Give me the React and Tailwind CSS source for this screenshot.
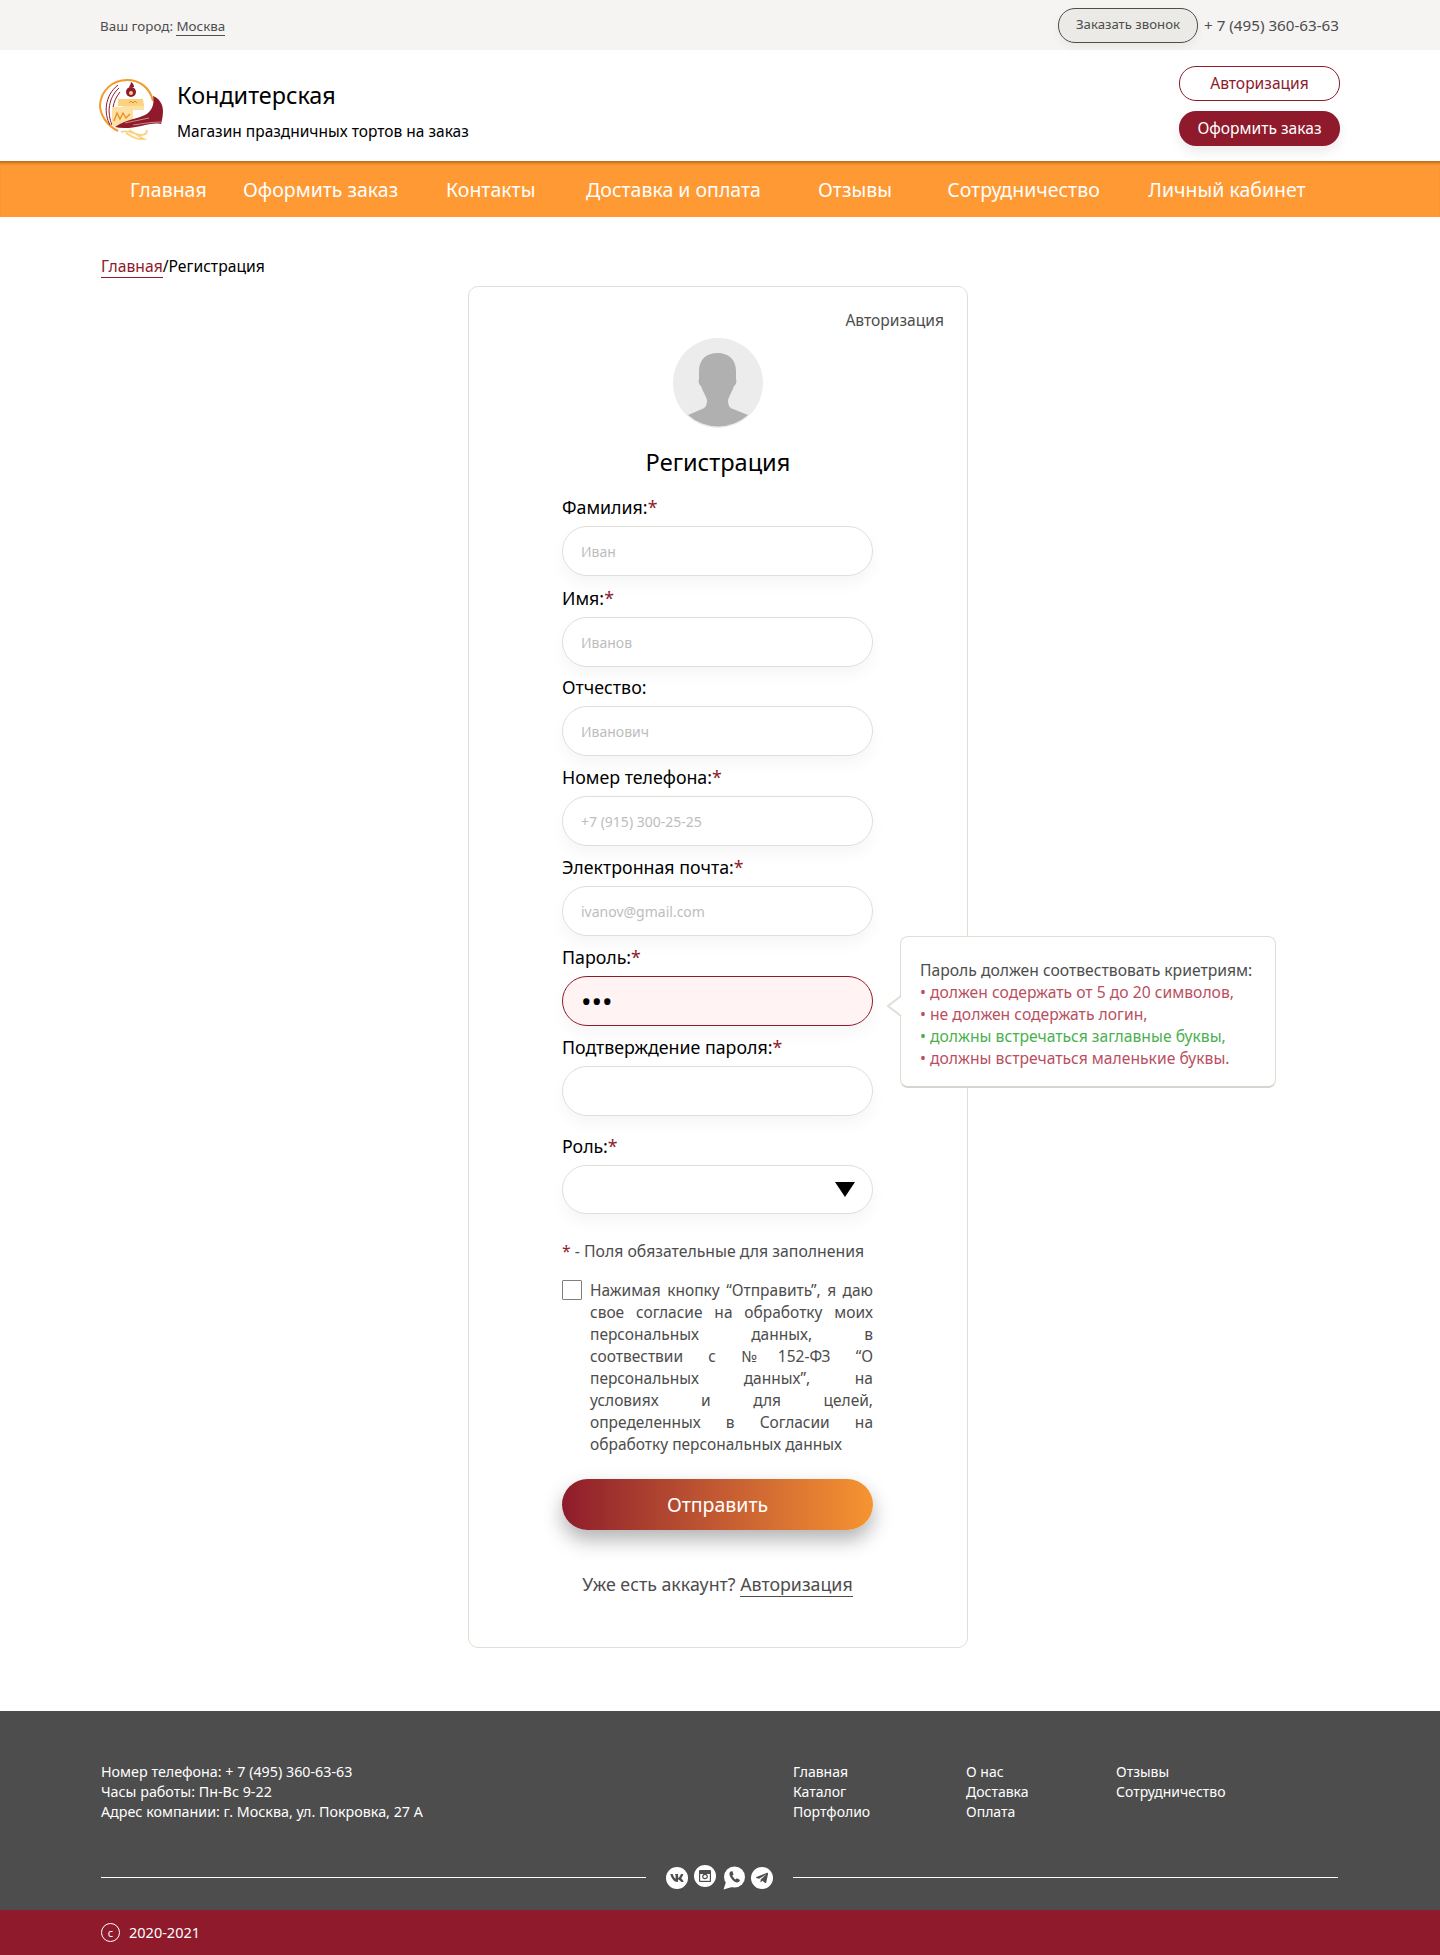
import React from 'react';
import { FaVk, FaTelegramPlane } from 'react-icons/fa';

const navItems = [
  { label: 'Главная', cls: 'w-[76px] ml-[130px]' },
  { label: 'Оформить заказ', cls: 'w-[154px] ml-[37px]' },
  { label: 'Контакты', cls: 'w-[89px] ml-[49px]' },
  { label: 'Доставка и оплата', cls: 'w-[179px] ml-[49px]' },
  { label: 'Отзывы', cls: 'w-[76px] ml-[54px]' },
  { label: 'Сотрудничество', cls: 'w-[153px] ml-[54px]' },
  { label: 'Личный кабинет', cls: 'w-[158px] ml-[48px]' },
];

const fields = [
  { label: 'Фамилия:', required: true, placeholder: 'Иван', rowCls: 'mb-[10px]' },
  { label: 'Имя:', required: true, placeholder: 'Иванов', rowCls: 'mb-[8px]' },
  { label: 'Отчество:', placeholder: 'Иванович', rowCls: 'mb-[9px]' },
  { label: 'Номер телефона:', required: true, placeholder: '+7 (915) 300-25-25', rowCls: 'mb-[9px]' },
  { label: 'Электронная почта:', required: true, placeholder: 'ivanov@gmail.com', rowCls: 'mb-[9px]' },
];

const consentLines = [
  'Нажимая кнопку “Отправить”, я даю',
  'свое согласие на обработку моих',
  'персональных данных, в',
  'соотвествии с №152-ФЗ “О',
  'персональных данных”, на',
  'условиях и для целей,',
  'определенных в Согласии на',
];

const Logo = () => (
  <svg width="65" height="67" viewBox="0 0 65 67" fill="none">
    <path d="M19 53C7 47 1 36 1 27 2 12 14 2 28 2c13 0 23 8 26 21" stroke="#f39a2c" strokeWidth="2" />
    <path d="M11 47C5 36 5 18 19 7M13 47C8 35 9 20 20 10M16 46C12 35 13 24 21 14" stroke="#8e1a2b" strokeWidth="1" />
    <circle cx="32" cy="14" r="5" fill="#8e1a2b" />
    <path d="M30 9c1-2 2-3 2-5 2 1 3 3 3 5Z" fill="#8e1a2b" />
    <circle cx="32" cy="15" r="2" fill="#fbd27f" />
    <path d="M19 21h25l1 7H19Z" fill="#fbd27f" />
    <path d="M24 28h21v4H24Z" fill="#fce0a4" />
    <path d="M13 29h21v16l-14 5-7-3Z" fill="#fce0a4" />
    <path d="M15 43l3-8 3 6 3-6 3 5 4-4" stroke="#ee8a1d" strokeWidth="1.300" />
    <path d="M30 25l2-2 2 2 2-2 2 2" stroke="#ee8a1d" strokeWidth="1" />
    <path d="M16 49C28 41 38 41 46 37C52 34 56 27 54 18C60 20 64 26 64 33C64 38 63 42 62 46C56 45 50 46 42 48C33 50 24 51 16 49Z" fill="#8e1a2b" />
    <path d="M26 45c8-2 16-3 24-5M34 47c8-1 18-3 28-3" stroke="#f7d9c0" strokeWidth="0.600" />
    <path d="M22 54c9-3 13 3 20 3 4 0 6-2 6-5M30 52c5 2 10 7 15 9-6 1-12-2-18-6" stroke="#fbd27f" strokeWidth="1.800" />
  </svg>
);

const Avatar = () => (
  <svg width="90" height="90" viewBox="0 0 90 90">
    <circle cx="45" cy="45" r="45" fill="#ececec" />
    <path d="M44.500 15C34 15 26 21 26 33V41C25 43 26 47 28 48C30 54 33 58 34 62C34 66 33 70 29 71L15 77A45 45 0 0 0 75 77L60 71C56 70 55 66 55 62C56 58 59 54 61 48C63 47 64 43 63 41V33C63 21 55 15 44.500 15Z" fill="#b0b0b0" />
  </svg>
);

const Star = () => <span className="text-[#8e1a2b]">*</span>;

const Field = ({ label, required, placeholder, rowCls, children }) => (
  <div className={`relative ${rowCls}`}>
    <div className="h-[24px] mb-[7px] text-[17.800px] leading-[24px] text-black whitespace-nowrap">
      {label}
      {required && <Star />}
    </div>
    {children || (
      <input
        placeholder={placeholder}
        className="block w-[311px] h-[50px] rounded-[25px] border border-[#e0dfd6] bg-white px-[18px] text-[14px] shadow-[0_8px_16px_rgba(0,0,0,0.04)] outline-none placeholder:text-[#bdbdbd]"
      />
    )}
  </div>
);

const PasswordHint = () => (
  <div className="absolute left-[338px] top-[-9px] z-10 w-[376px] h-[152px] rounded-[8px] border border-[#e0dfd6] border-b-2 border-b-[#d5d5d0] bg-white pl-[19px] pt-[22px] text-[15.700px] leading-[22px] whitespace-nowrap">
    <svg className="absolute left-[-15px] top-[58px]" width="16" height="22" viewBox="0 0 16 22">
      <path d="M15 1L2 11l13 10" fill="#fff" stroke="#e0dfd6" strokeWidth="2" />
    </svg>
    <div className="text-[#4d4d4d]">Пароль должен соотвествовать криетриям:</div>
    <div className="text-[#b9505f]">• должен содержать от 5 до 20 символов,</div>
    <div className="text-[#b9505f]">• не должен содержать логин,</div>
    <div className="text-[#4caf50]">• должны встречаться заглавные буквы,</div>
    <div className="text-[#b9505f]">• должны встречаться маленькие буквы.</div>
  </div>
);

const Social = () => (
  <div className="flex items-center gap-[6px] mx-[20px]">
    <span className="flex items-center justify-center w-[22px] h-[22px] rounded-full bg-white text-[#4d4d4d] text-[14px]"><FaVk /></span>
    <svg className="mb-[3px]" width="22" height="22" viewBox="0 0 22 22">
      <circle cx="11" cy="11" r="11" fill="#fff" />
      <rect x="5" y="5" width="12" height="12" rx="1" fill="#4d4d4d" />
      <rect x="6.200" y="9" width="9.600" height="6.800" fill="#fff" />
      <circle cx="11" cy="11.500" r="2.800" fill="#4d4d4d" />
      <circle cx="11" cy="11.500" r="1.600" fill="#fff" />
    </svg>
    <svg width="23" height="24" viewBox="0 0 23 24">
      <circle cx="12.500" cy="11" r="10.500" fill="#fff" />
      <path d="M4 16L1.500 23.500 10 21Z" fill="#fff" />
      <path d="M8.500 5.500c-1.500 1-1.500 3.500.5 6.500s4.500 4.500 6.500 4.500c1 0 2-1 2.500-2.500l-3.200-1.800-1.300 1.200c-1-.3-3-2.700-3.200-3.800l1.200-1-1-3.300z" fill="#4d4d4d" />
    </svg>
    <span className="flex items-center justify-center w-[22px] h-[22px] rounded-full bg-white text-[#4d4d4d] text-[14px]"><FaTelegramPlane /></span>
  </div>
);

const App = () => {
  return (
    <div className="min-h-[1955px] bg-white font-['Noto_Sans',sans-serif] text-[#4d4d4d]">
      <div className="h-[50px] bg-[#f5f4f2] flex items-center justify-between pl-[100px] pr-[101px]">
        <div className="text-[13.400px] mt-[2px]">
          Ваш город: <span className="border-b border-[#4d4d4d]">Москва</span>
        </div>
        <div className="flex items-center">
          <button className="w-[140px] h-[35px] rounded-[17px] border border-[#4d4d4d] bg-[#ebeae7] text-[13.200px] shadow-[0_4px_10px_rgba(0,0,0,0.05)]">
            Заказать звонок
          </button>
          <span className="ml-[6px] text-[15.200px] whitespace-nowrap">+ 7 (495) 360-63-63</span>
        </div>
      </div>

      <div className="h-[111px] flex justify-between pl-[99px] pr-[100px] pt-[16px]">
        <div className="flex items-start pt-[12px]">
          <Logo />
          <div className="ml-[13px] pt-[2px]">
            <div className="mt-[-2px] text-[23.400px] leading-[34px] text-black">Кондитерская</div>
            <div className="mt-[8px] text-[15.500px] leading-[22px] text-black">Магазин праздничных тортов на заказ</div>
          </div>
        </div>
        <div className="flex flex-col gap-[10px]">
          <button className="w-[161px] h-[35px] rounded-[17px] border border-[#8e1a2b] text-[15.600px] text-[#8e1a2b]">Авторизация</button>
          <button className="w-[161px] h-[35px] rounded-[17px] bg-[#8e1a2b] text-[15.600px] text-white shadow-[0_6px_12px_rgba(0,0,0,0.08)]">Оформить заказ</button>
        </div>
      </div>

      <nav className="h-[56px] pt-[2px] bg-[#ff9933] shadow-[inset_0_4px_3px_-2px_rgba(100,50,0,0.45)] flex items-center">
        {navItems.map((item) => (
          <a key={item.label} className={`${item.cls} text-center text-[19.500px] text-white whitespace-nowrap`}>
            {item.label}
          </a>
        ))}
      </nav>

      <div className="pt-[38px] pb-[1px] pl-[101px] text-[15.700px] leading-[22px] text-black">
        <span className="text-[#8e1a2b] border-b border-[#8e1a2b]">Главная</span>/Регистрация
      </div>

      <div className="mt-[8px] mb-[63px] ml-[468px] w-[500px] rounded-[10px] border border-[#e0dfd6] pt-[21px] pb-[50px] flex flex-col items-center">
        <a className="self-end mr-[23px] text-[15.600px] leading-[24px]">Авторизация</a>
        <div className="mt-[6px]"><Avatar /></div>
        <h1 className="mt-[18px] mb-[17px] text-[23.600px] leading-[32px] text-black">Регистрация</h1>

        <div className="w-[311px] self-start ml-[93px]">
          {fields.map((f) => (
            <Field key={f.label} {...f} />
          ))}
          <Field label="Пароль:" required rowCls="mb-[9px]">
            <input
              type="password"
              value="123"
              readOnly
              className="block w-[311px] h-[50px] rounded-[25px] border border-[#8e1a2b] bg-[#fff4f3] px-[18px] text-[28px] text-black shadow-[0_8px_16px_rgba(0,0,0,0.04)] outline-none"
            />
            <PasswordHint />
          </Field>
          <Field label="Подтверждение пароля:" required placeholder="" rowCls="mb-[18px]" />
          <Field label="Роль:" required rowCls="">
            <div className="flex items-center justify-end w-[311px] h-[49px] rounded-[25px] border border-[#e0dfd6] bg-white pr-[17px] shadow-[0_8px_16px_rgba(0,0,0,0.04)]">
              <svg width="20" height="15" viewBox="0 0 20 15"><path d="M0 0h20L10 15Z" fill="#000" /></svg>
            </div>
          </Field>

          <div className="mt-[26px] text-[15.800px] leading-[22px] whitespace-nowrap">
            <Star /> - Поля обязательные для заполнения
          </div>

          <div className="mt-[18px] flex items-start">
            <span className="shrink-0 w-[20px] h-[20px] border border-[#808080] rounded-[1px]" />
            <div className="ml-[8px] mt-[-1px] mb-[1px] w-[283px] text-[15.500px] leading-[22px]">
              {consentLines.map((line) => (
                <div key={line} className="text-justify [text-align-last:justify]">{line}</div>
              ))}
              <div>обработку персональных данных</div>
            </div>
          </div>

          <button className="mt-[23px] w-[311px] h-[51px] rounded-[26px] bg-gradient-to-r from-[#8e1a2b] to-[#f79430] text-[19.500px] text-white shadow-[0_10px_20px_rgba(0,0,0,0.3)]">
            Отправить
          </button>

          <div className="mt-[41px] text-center text-[17.800px] leading-[26px] whitespace-nowrap">
            Уже есть аккаунт? <span className="border-b border-[#4d4d4d]">Авторизация</span>
          </div>
        </div>
      </div>

      <footer className="h-[199px] bg-[#4d4d4d] text-white text-[14px] leading-[20px] pt-[51px]">
        <div className="flex pl-[101px]">
          <div className="w-[692px] whitespace-nowrap text-[14.300px]">
            <div>Номер телефона: + 7 (495) 360-63-63</div>
            <div>Часы работы: Пн-Вс 9-22</div>
            <div>Адрес компании: г. Москва, ул. Покровка, 27 А</div>
          </div>
          <div className="w-[173px]">
            <div>Главная</div>
            <div>Каталог</div>
            <div>Портфолио</div>
          </div>
          <div className="w-[150px]">
            <div>О нас</div>
            <div>Доставка</div>
            <div>Оплата</div>
          </div>
          <div>
            <div>Отзывы</div>
            <div>Сотрудничество</div>
          </div>
        </div>
        <div className="mt-[43px] flex items-center pl-[101px] pr-[102px]">
          <div className="flex-1 h-px bg-white" />
          <Social />
          <div className="flex-1 h-px bg-white" />
        </div>
      </footer>
      <div className="h-[45px] bg-[#8e1a2b] flex items-center pl-[101px] text-white text-[14.500px]">
        <span className="flex items-center justify-center w-[19px] h-[19px] rounded-full border border-white text-[11px] leading-none">c</span>
        <span className="ml-[9px]">2020-2021</span>
      </div>
    </div>
  );
};

export default App;
